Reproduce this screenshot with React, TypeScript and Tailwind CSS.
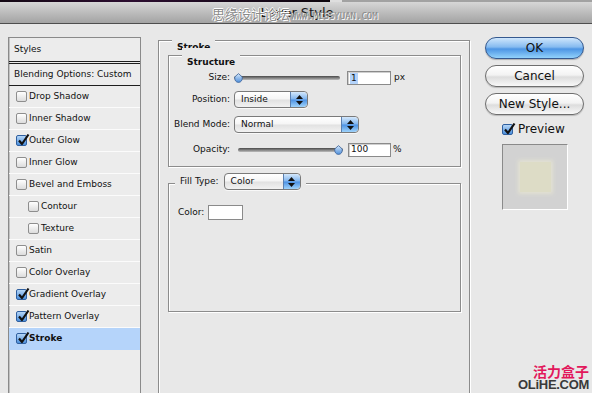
import React from 'react';

type StyleItem = { label: string; on?: boolean; sub?: boolean; active?: boolean };

const styleItems: StyleItem[] = [
  { label: 'Drop Shadow' },
  { label: 'Inner Shadow' },
  { label: 'Outer Glow', on: true },
  { label: 'Inner Glow' },
  { label: 'Bevel and Emboss' },
  { label: 'Contour', sub: true },
  { label: 'Texture', sub: true },
  { label: 'Satin' },
  { label: 'Color Overlay' },
  { label: 'Gradient Overlay', on: true },
  { label: 'Pattern Overlay', on: true },
  { label: 'Stroke', on: true, active: true },
];

function Check({ on }: { on?: boolean }) {
  return (
    <span
      className={
        on
          ? 'relative inline-block w-[11px] h-[11px] shrink-0 rounded-[2px] border border-[#2f5f9f] bg-gradient-to-b from-[#b5d6f7] to-[#4a8fdc]'
          : 'relative inline-block w-[11px] h-[11px] shrink-0 rounded-[2px] border border-[#8e8e8e] bg-gradient-to-b from-white to-[#dcdcdc]'
      }
    >
      {on && (
        <svg className="absolute left-[0px] -top-[3px]" width="13" height="13" viewBox="0 0 13 13">
          <path d="M2 7.5 L5 11 L11.5 1.5" fill="none" stroke="#111" strokeWidth="2.2" strokeLinejoin="round" />
        </svg>
      )}
    </span>
  );
}

function Stepper() {
  return (
    <div className="w-[17px] h-full shrink-0 flex flex-col items-center justify-center gap-[2px] rounded-r-[4px] border-l border-[#5a7fb0] bg-[linear-gradient(to_bottom,#d4e8fc_0%,#7fb4ee_48%,#4c91e3_52%,#9fd3fb_100%)]">
      <svg width="7" height="4" viewBox="0 0 7 4">
        <path d="M0 4 L3.5 0 L7 4 Z" fill="#111" />
      </svg>
      <svg width="7" height="4" viewBox="0 0 7 4">
        <path d="M0 0 L3.5 4 L7 0 Z" fill="#111" />
      </svg>
    </div>
  );
}

function Popup({ value, width }: { value: string; width: string }) {
  return (
    <div
      className={`${width} h-[17px] flex rounded-[4px] border border-[#7a7a7a] overflow-hidden bg-[linear-gradient(to_bottom,#ffffff_0%,#f5f5f5_48%,#e1e1e1_52%,#f2f2f2_100%)] shadow-[0_1px_0_#f8f8f8]`}
    >
      <span className="flex-1 pl-[6px] text-[9px] leading-[15px] text-[#111]">{value}</span>
      <Stepper />
    </div>
  );
}

function Slider({ width, at }: { width: string; at: 'start' | 'end' }) {
  return (
    <div className={`relative ${width} h-[10px] flex items-center`}>
      <div className="w-full h-[4px] rounded-full bg-gradient-to-b from-[#4a4a4a] to-[#bdbdbd]" />
      <svg
        className={at === 'start' ? 'absolute left-0 top-0' : 'absolute right-0 top-0'}
        width="9"
        height="10"
        viewBox="0 0 9 10"
      >
        <defs>
          <linearGradient id={`k-${at}`} x1="0" y1="0" x2="0" y2="1">
            <stop offset="0" stopColor="#d5e8fb" />
            <stop offset="1" stopColor="#4f8fdb" />
          </linearGradient>
        </defs>
        <path
          d="M4.5 0.6 L8.3 4 Q8.5 9.2 4.5 9.4 Q0.5 9.2 0.7 4 Z"
          fill={`url(#k-${at})`}
          stroke="#3a5f95"
          strokeWidth="0.8"
        />
      </svg>
    </div>
  );
}

function Field({ width, children }: { width: string; children: React.ReactNode }) {
  return (
    <div
      className={`${width} h-[14px] shrink-0 bg-white border border-[#8a8a8a] shadow-[inset_1px_1px_0_#cfcfcf] flex items-center pl-[2px] text-[9px] text-[#111]`}
    >
      {children}
    </div>
  );
}

function Group({
  legend,
  className,
  legendClass,
  children,
}: {
  legend: React.ReactNode;
  className: string;
  legendClass: string;
  children?: React.ReactNode;
}) {
  return (
    <div className={`relative shrink-0 border border-[#8c8c8c] shadow-[1px_1px_0_#ffffff,inset_1px_1px_0_#ffffff] ${className}`}>
      <div className={`absolute px-[5px] bg-[#e8e8e8] ${legendClass}`}>{legend}</div>
      {children}
    </div>
  );
}

function AquaButton({ label, primary }: { label: string; primary?: boolean }) {
  return (
    <button
      className={
        primary
          ? 'h-[22px] w-full rounded-full border border-[#35598f] bg-[linear-gradient(to_bottom,#cfe6fc_0%,#86bbf0_45%,#4d95e4_55%,#92d2fb_100%)] text-[12px] leading-[20px] text-[#111] shadow-[0_1px_1px_rgba(0,0,0,0.25)]'
          : 'h-[22px] w-full rounded-full border border-[#6e6e6e] bg-[linear-gradient(to_bottom,#ffffff_0%,#f3f3f3_45%,#dddddd_55%,#f8f8f8_100%)] text-[12px] leading-[20px] text-[#111] shadow-[0_1px_1px_rgba(0,0,0,0.2)]'
      }
    >
      {label}
    </button>
  );
}

export default function App() {
  return (
    <div className="relative w-[592px] h-[393px] overflow-hidden bg-[#e8e8e8] flex flex-col font-['DejaVu_Sans','Liberation_Sans',sans-serif] text-[#111]">
      {/* window above, peeking through */}
      <div className="h-[2px] flex shrink-0">
        <div className="w-[330px] bg-[linear-gradient(90deg,#140814,#2c0d30_40%,#1a0a1c_70%,#0e060e)]" />
        <div className="w-[12px] bg-[#dedede]" />
        <div className="flex-1 bg-[#a2a2a2]" />
      </div>

      {/* title bar */}
      <div className="relative h-[22px] shrink-0 border-b border-[#4e4e4e] bg-gradient-to-b from-[#d7d7d7] to-[#a3a3a3] flex justify-center">
        <span className="text-[13px] leading-[21px] pl-[2px] text-[#1a1a1a]">Layer Style</span>
        <div className="absolute left-[212px] top-[4px] flex items-end gap-[1px]">
          <span className="text-[13px] leading-[16px] text-[#8a8a8a] font-['Noto_Sans_CJK_SC',sans-serif] [text-shadow:1px_1px_0_#fff,-1px_0_0_#fff,0_-1px_0_#fff]">
            思缘设计论坛
          </span>
          <span className="text-[9px] leading-[12px] text-[#8a8a8a] font-['DejaVu_Sans_Mono',monospace] [text-shadow:1px_1px_0_#fff]">
            WWW.MISSYUAN.COM
          </span>
        </div>
      </div>

      {/* body */}
      <div className="flex-1 flex items-start overflow-hidden">
        {/* styles list */}
        <div className="ml-[8px] mt-[13px] w-[133px] h-[400px] shrink-0 border border-[#8a8a8a] bg-[#ececec] shadow-[inset_1px_0_0_#c2c2c2]">
          <div className="h-[23px] flex items-center pl-[5px] text-[9px]">Styles</div>
          <div className="h-[3px] border-y border-[#1e1e1e]" />
          <div className="h-[22px] flex items-center pl-[5px] text-[9px] border-b border-[#1e1e1e]">
            Blending Options: Custom
          </div>
          {styleItems.map((s) => (
            <div
              key={s.label}
              className={
                s.active
                  ? 'h-[22px] flex items-center gap-[2px] bg-[#b5d4fa] border-b border-[#b5d4fa] text-[9px] font-bold ' +
                    (s.sub ? 'pl-[19px]' : 'pl-[7px]')
                  : 'h-[22px] flex items-center gap-[2px] border-b border-[#fbfbfb] text-[9px] ' +
                    (s.sub ? 'pl-[19px]' : 'pl-[7px]')
              }
            >
              <Check on={s.on} />
              <span>{s.label}</span>
            </div>
          ))}
        </div>

        {/* stroke settings */}
        <Group
          legend={<span className="text-[9px] font-bold leading-[14px]">Stroke</span>}
          legendClass="left-[13px] -top-[8px]"
          className="ml-[17px] mt-[16px] w-[312px] h-[400px]"
        >
          <Group
            legend={<span className="text-[9px] font-bold leading-[14px]">Structure</span>}
            legendClass="left-[13px] -top-[8px]"
            className="ml-[9px] mt-[14px] w-[293px] h-[112px]"
          >
            <div className="pt-[15px] flex flex-col text-[9px]">
              <div className="h-[14px] flex items-center">
                <span className="w-[61px] text-right">Size:</span>
                <div className="ml-[4px]">
                  <Slider width="w-[106px]" at="start" />
                </div>
                <div className="ml-[7px]">
                  <Field width="w-[44px]">
                    <span className="bg-[#b3d3fb] px-[1px] leading-[11px]">1</span>
                  </Field>
                </div>
                <span className="ml-[3px]">px</span>
              </div>
              <div className="mt-[6px] h-[17px] flex items-center">
                <span className="w-[61px] text-right">Position:</span>
                <div className="ml-[4px]">
                  <Popup value="Inside" width="w-[74px]" />
                </div>
              </div>
              <div className="mt-[8px] h-[17px] flex items-center">
                <span className="w-[61px] text-right">Blend Mode:</span>
                <div className="ml-[4px]">
                  <Popup value="Normal" width="w-[125px]" />
                </div>
              </div>
              <div className="mt-[10px] h-[14px] flex items-center">
                <span className="w-[61px] text-right">Opacity:</span>
                <div className="ml-[8px]">
                  <Slider width="w-[105px]" at="end" />
                </div>
                <div className="ml-[5px]">
                  <Field width="w-[43px]">100</Field>
                </div>
                <span className="ml-[2px]">%</span>
              </div>
            </div>
          </Group>

          <Group
            legend={
              <div className="flex items-center gap-[5px]">
                <span className="text-[9px]">Fill Type:</span>
                <Popup value="Color" width="w-[77px]" />
              </div>
            }
            legendClass="left-[6px] -top-[11px]"
            className="ml-[9px] mt-[16px] w-[293px] h-[129px]"
          >
            <div className="pt-[21px] pl-[9px] flex items-center text-[9px]">
              <span>Color:</span>
              <div className="ml-[4px] w-[35px] h-[15px] bg-white border border-[#8a8a8a]" />
            </div>
          </Group>
        </Group>

        {/* buttons */}
        <div className="ml-[15px] mt-[13px] w-[99px] shrink-0 flex flex-col">
          <div className="flex flex-col gap-[6px]">
            <AquaButton label="OK" primary />
            <AquaButton label="Cancel" />
            <AquaButton label="New Style..." />
          </div>
          <div className="mt-[7px] ml-[17px] flex items-center gap-[5px]">
            <Check on />
            <span className="text-[12px] leading-[14px]">Preview</span>
          </div>
          <div className="mt-[8px] ml-[17px] w-[66px] h-[66px] border border-t-[#8a8a8a] border-l-[#8a8a8a] border-r-white border-b-white bg-[#d2d2d2] flex items-center justify-center">
            <div className="w-[31px] h-[30px] bg-[#dddcc6] shadow-[0_0_4px_2px_#e2e1d2]" />
          </div>
        </div>
      </div>

      {/* site watermark */}
      <div className="absolute right-[3px] bottom-[2px] flex flex-col items-end">
        <span className="text-[14px] leading-[15px] font-bold text-[#e2185c] font-['Noto_Sans_CJK_SC',sans-serif]">
          活力盒子
        </span>
        <span className="text-[13px] leading-[12px] font-bold tracking-[-0.3px] text-[#3a3a3a] font-['Liberation_Sans',sans-serif]">
          OLiHE.COM
        </span>
      </div>
    </div>
  );
}
